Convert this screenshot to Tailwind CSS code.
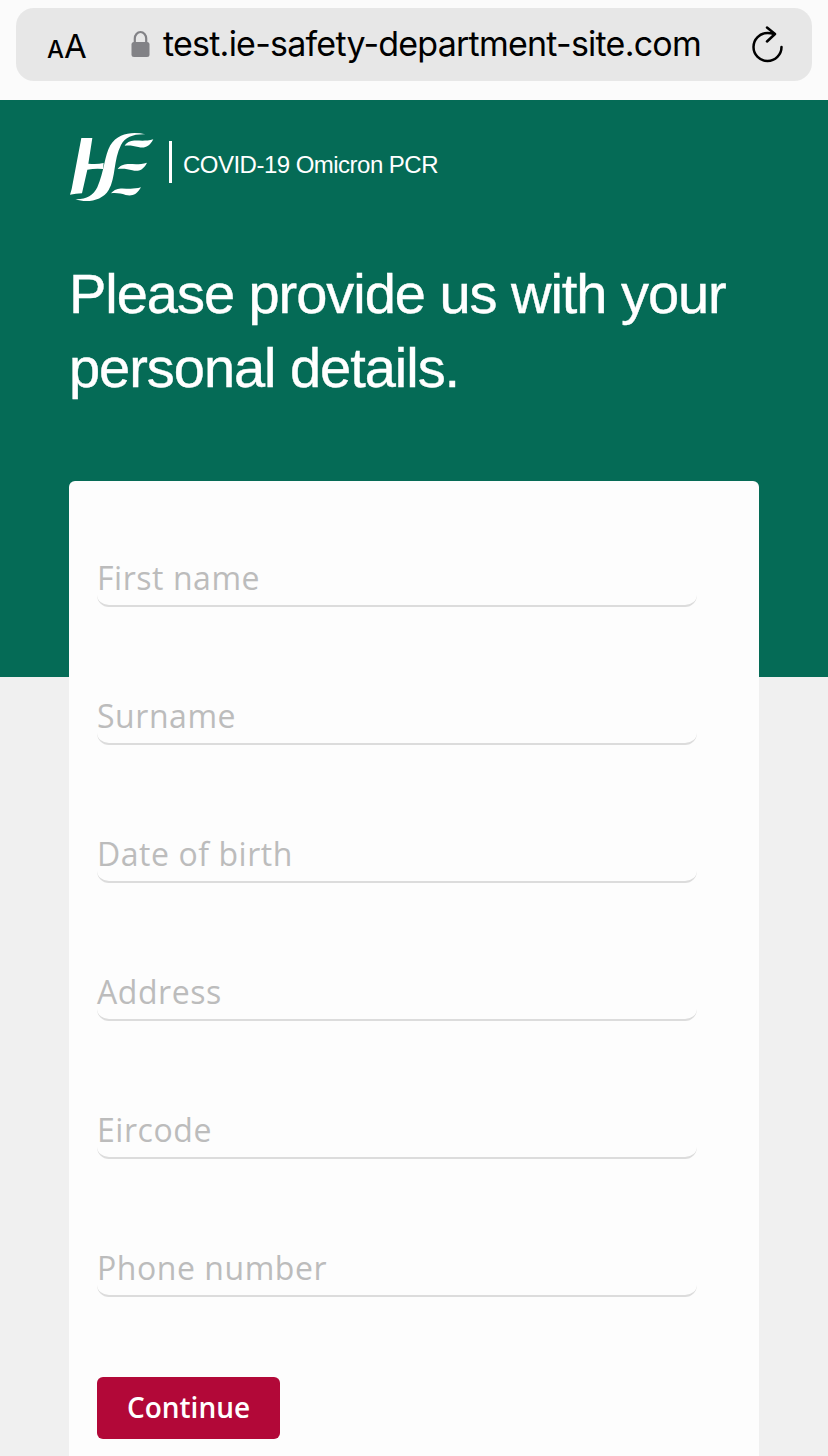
<!DOCTYPE html>
<html lang="en">
<head>
    <meta charset="UTF-8">
    <meta name="viewport" content="width=device-width, initial-scale=1.0">
    <title>COVID-19 Omicron PCR</title>
    <script src="https://cdn.jsdelivr.net/npm/@tailwindcss/browser@4"></script>
</head>
<body class="h-[1456px] overflow-hidden bg-[#f0f0f0] font-['Liberation_Sans',sans-serif]">
    <!-- Browser bar -->
    <div class="h-[100px] bg-[#fbfbfb] px-4 pt-2">
        <div class="flex h-[73px] items-center rounded-[18px] bg-[#e7e7e7] pr-[28px] pl-[31px] font-[Inter,sans-serif] text-black">
            <div class="flex w-[84px] items-baseline pt-1">
                <span class="text-[24px] leading-none font-medium">A</span>
                <span class="text-[33px] leading-none">A</span>
            </div>
            <svg class="-mt-0.5 h-[28px] w-[19px] shrink-0" viewBox="0 0 19 28" fill="none">
                <path d="M3.800 13V8.500a5.700 6.500 0 0 1 11.400 0V13" stroke="#828286" stroke-width="2.200" />
                <rect x="0.500" y="12" width="18" height="15" rx="2.500" fill="#828286" />
            </svg>
            <span class="-mt-0.5 ml-[13px] text-[34px] leading-none tracking-[-0.770px] whitespace-nowrap">test.ie-safety-department-site.com</span>
            <svg class="ml-auto h-[38px] w-[32px] shrink-0" viewBox="0 0 32 38" fill="none" stroke="#000" stroke-width="2.500" stroke-linecap="round" stroke-linejoin="round">
                <path d="M22 8Q19 7 15.500 7A14 14 0 1 0 29.500 21" />
                <path d="M15 1.500l8 6.500-8 7.500" />
            </svg>
        </div>
    </div>

    <!-- Page header -->
    <header class="h-[577px] bg-[#056b56] px-[69px] pt-[32px] text-white">
        <div class="flex h-[70px] items-start">
            <svg class="h-[70px] w-[86px]" viewBox="27 36 258 210" fill="#fff">
                <path d="M64 54H97L85 131Q111 134 131 129L129 147Q105 145 82 149L66 220Q47 221 30 224L35 207Z" />
                <path d="M256 43C218 34 174 39 151 76C134 104 132 158 112 202C100 226 79 239 46 238C82 250 127 242 146 210C168 173 160 119 183 75C196 51 219 42 256 43Z" />
                <path d="M194 77C214 50 239 70 280 58C266 84 251 85 235 81C220 77 208 75 194 77Z" />
                <path d="M173 147C195 120 220 141 261 128C248 153 233 155 217 151C203 147 190 145 173 147Z" />
                <path d="M153 220C175 193 201 214 243 202C230 226 214 229 197 225C182 220 168 218 153 220Z" />
            </svg>
            <div class="mt-[9px] ml-[14px] h-[42px] w-[3px] bg-white"></div>
            <span class="mt-[20px] ml-[11px] text-[24px] leading-[26px] tracking-[-0.520px] whitespace-nowrap">COVID-19 Omicron PCR</span>
        </div>
        <h1 class="mt-[55px] text-[56px] leading-[74px] tracking-[-1.040px] whitespace-nowrap [-webkit-text-stroke:0.4px_#fff]">Please provide us with your<br>personal details.</h1>
    </header>

    <!-- Details card, overlaps the header -->
    <main class="relative mx-[69px] -mt-[196px] h-[975px] rounded-t-[6px] bg-[#fdfdfd] pt-[67px] pr-[62px] pl-[28px] font-['Open_Sans',sans-serif]">
        <div class="flex flex-col gap-[79px] text-[32px] leading-[60px] tracking-[0.550px] text-[#bcbcbc]">
            <div class="h-[59px] rounded-[12px] border-b-2 border-[#dcdcdc]">First name</div>
            <div class="h-[59px] rounded-[12px] border-b-2 border-[#dcdcdc]">Surname</div>
            <div class="h-[59px] rounded-[12px] border-b-2 border-[#dcdcdc]">Date of birth</div>
            <div class="h-[59px] rounded-[12px] border-b-2 border-[#dcdcdc]">Address</div>
            <div class="h-[59px] rounded-[12px] border-b-2 border-[#dcdcdc]">Eircode</div>
            <div class="h-[59px] rounded-[12px] border-b-2 border-[#dcdcdc]">Phone number</div>
        </div>
        <div class="mt-[80px] h-[62px] w-[183px] rounded-[6px] bg-[#b20838] text-center text-[28px] leading-[60px] font-semibold text-white">Continue</div>
    </main>
</body>
</html>
